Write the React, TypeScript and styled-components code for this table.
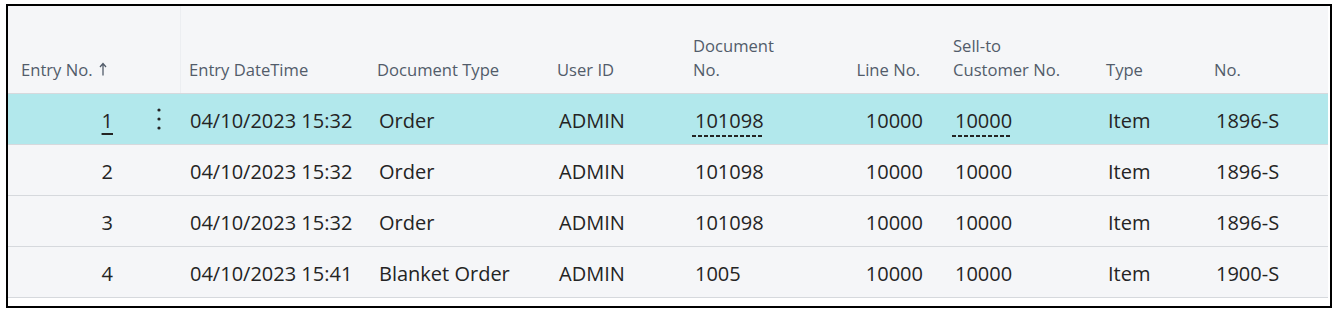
import styled, { createGlobalStyle } from 'styled-components';
import { FC } from 'react';

type Entry = {
  entryNo: number;
  dateTime: string;
  docType: string;
  userId: string;
  docNo: string;
  lineNo: string;
  sellTo: string;
  type: string;
  no: string;
};

const entries: Entry[] = [
  { entryNo: 1, dateTime: '04/10/2023 15:32', docType: 'Order', userId: 'ADMIN', docNo: '101098', lineNo: '10000', sellTo: '10000', type: 'Item', no: '1896-S' },
  { entryNo: 2, dateTime: '04/10/2023 15:32', docType: 'Order', userId: 'ADMIN', docNo: '101098', lineNo: '10000', sellTo: '10000', type: 'Item', no: '1896-S' },
  { entryNo: 3, dateTime: '04/10/2023 15:32', docType: 'Order', userId: 'ADMIN', docNo: '101098', lineNo: '10000', sellTo: '10000', type: 'Item', no: '1896-S' },
  { entryNo: 4, dateTime: '04/10/2023 15:41', docType: 'Blanket Order', userId: 'ADMIN', docNo: '1005', lineNo: '10000', sellTo: '10000', type: 'Item', no: '1900-S' },
];

const columns = '129px 43px 189px 180px 136px 140px 120px 153px 108px 122px';

const GlobalStyle = createGlobalStyle`
  body {
    margin: 0;
    background: #fff;
    font-family: 'Open Sans', 'Noto Sans', sans-serif;
  }
`;

const SC = {
  Page: styled.div`
    padding: 4px 0 0 6px;
  `,
  Frame: styled.div`
    box-sizing: border-box;
    width: 1326px;
    height: 304px;
    border: 2px solid #000;
    background: #fff;
    padding-right: 2px;
  `,
  Grid: styled.div`
    background: #f5f6f8;
  `,
  HeaderRow: styled.div`
    display: grid;
    grid-template-columns: ${columns};
    height: 87px;
    border-bottom: 1px solid #d6d9dd;
  `,
  HeaderCell: styled.div<{ $right?: boolean; $pad?: number; $divider?: boolean }>`
    display: flex;
    align-items: flex-end;
    justify-content: ${(p) => (p.$right ? 'flex-end' : 'flex-start')};
    padding: 0 ${(p) => (p.$right ? 25 : 0)}px 11px ${(p) => p.$pad ?? 8}px;
    font-size: 16.6px;
    line-height: 24px;
    color: #525c6a;
    text-align: ${(p) => (p.$right ? 'right' : 'left')};
    border-left: ${(p) => (p.$divider ? '1px solid #eceef1' : 'none')};
  `,
  SortArrow: styled.svg`
    margin: 0 0 6px 6px;
  `,
  Row: styled.div<{ $selected?: boolean }>`
    display: grid;
    grid-template-columns: ${columns};
    height: 50px;
    border-bottom: 1px solid #d6d9dd;
    background: ${(p) => (p.$selected ? '#b2e8ec' : 'transparent')};
  `,
  Cell: styled.div<{ $right?: boolean; $padRight?: number }>`
    display: flex;
    align-items: center;
    justify-content: ${(p) => (p.$right ? 'flex-end' : 'flex-start')};
    padding: 2px ${(p) => p.$padRight ?? 0}px 0 ${(p) => (p.$right ? 0 : 10)}px;
    font-size: 20px;
    color: #242424;
    white-space: nowrap;
  `,
  DotsCell: styled.div`
    display: flex;
    align-items: center;
    justify-content: center;
    padding-left: 1px;
  `,
  Focused: styled.span`
    text-decoration: underline solid #242424;
    text-decoration-thickness: 2px;
    text-underline-offset: 5px;
  `,
  Link: styled.span`
    padding: 0 0 5px 3px;
    margin: 0 0 -5px -3px;
    background-image: linear-gradient(to right, #242424 0 4px, transparent 4px 6px);
    background-size: 6px 1.5px;
    background-repeat: repeat-x;
    background-position: left bottom 2px;
  `,
};

const MoreDots: FC = () => (
  <svg width="4" height="22" viewBox="0 0 4 22">
    <circle cx="2" cy="2" r="1.6" fill="#242424" />
    <circle cx="2" cy="11" r="1.6" fill="#242424" />
    <circle cx="2" cy="20" r="1.6" fill="#242424" />
  </svg>
);

const App: FC = () => {
  return (
    <>
      <GlobalStyle />
      <SC.Page>
        <SC.Frame>
          <SC.Grid>
            <SC.HeaderRow>
              <SC.HeaderCell $pad={13}>
                Entry No.
                <SC.SortArrow width="8" height="14" viewBox="0 0 8 14">
                  <path d="M4 13.5V1.5M1 5L4 1.5L7 5" stroke="#525c6a" strokeWidth="1.3" fill="none" />
                </SC.SortArrow>
              </SC.HeaderCell>
              <SC.HeaderCell />
              <SC.HeaderCell $divider>Entry DateTime</SC.HeaderCell>
              <SC.HeaderCell>Document Type</SC.HeaderCell>
              <SC.HeaderCell>User ID</SC.HeaderCell>
              <SC.HeaderCell>
                Document
                <br />
                No.
              </SC.HeaderCell>
              <SC.HeaderCell $right>Line No.</SC.HeaderCell>
              <SC.HeaderCell>
                Sell-to
                <br />
                Customer No.
              </SC.HeaderCell>
              <SC.HeaderCell>Type</SC.HeaderCell>
              <SC.HeaderCell>No.</SC.HeaderCell>
            </SC.HeaderRow>
            {entries.map((e, i) => {
              const selected = i === 0;
              return (
                <SC.Row key={e.entryNo} $selected={selected}>
                  <SC.Cell $right $padRight={24}>
                    {selected ? <SC.Focused>{e.entryNo}</SC.Focused> : e.entryNo}
                  </SC.Cell>
                  <SC.DotsCell>{selected && <MoreDots />}</SC.DotsCell>
                  <SC.Cell>{e.dateTime}</SC.Cell>
                  <SC.Cell>{e.docType}</SC.Cell>
                  <SC.Cell>{e.userId}</SC.Cell>
                  <SC.Cell>{selected ? <SC.Link>{e.docNo}</SC.Link> : e.docNo}</SC.Cell>
                  <SC.Cell $right $padRight={22}>{e.lineNo}</SC.Cell>
                  <SC.Cell>{selected ? <SC.Link>{e.sellTo}</SC.Link> : e.sellTo}</SC.Cell>
                  <SC.Cell>{e.type}</SC.Cell>
                  <SC.Cell>{e.no}</SC.Cell>
                </SC.Row>
              );
            })}
          </SC.Grid>
        </SC.Frame>
      </SC.Page>
    </>
  );
};

export default App;
